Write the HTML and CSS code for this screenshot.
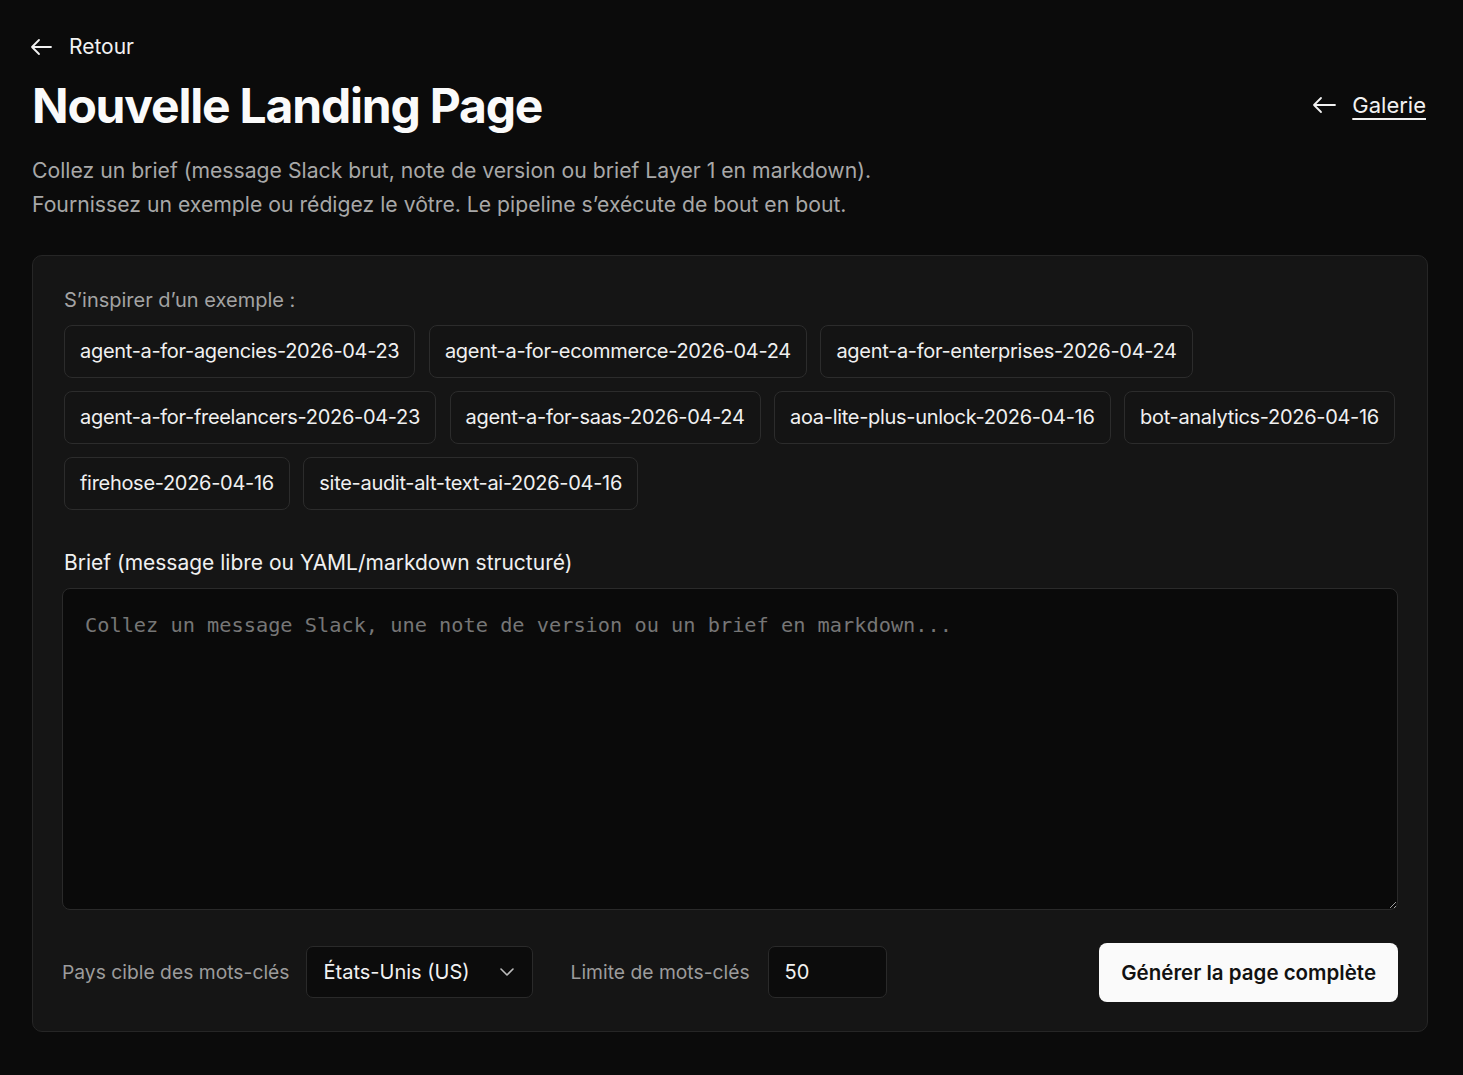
FILE: index.html
```html
<!DOCTYPE html>
<html lang="fr">
  <head>
    <meta charset="utf-8">
    <link rel="stylesheet" href="styles.css">
  </head>

  <body>
    <div class="page">
      <a class="back" href="#">
        <svg width="22" height="18" viewBox="0 0 22 18" fill="none" stroke="currentColor" stroke-width="1.8" stroke-linecap="round" stroke-linejoin="round">
          <path d="M21 9H2M9 2L2 9l7 7"/>
        </svg>
        Retour
      </a>

      <div class="titleRow">
        <h1>Nouvelle Landing Page</h1>
        <a class="gallery" href="#">
          <svg width="24" height="18" viewBox="0 0 24 18" fill="none" stroke="currentColor" stroke-width="1.8" stroke-linecap="round" stroke-linejoin="round">
            <path d="M23 9H2M9 2L2 9l7 7"/>
          </svg>
          <span>Galerie</span>
        </a>
      </div>

      <p class="intro">
        Collez un brief (message Slack brut, note de version ou brief Layer 1 en markdown).<br>
        Fournissez un exemple ou rédigez le vôtre. Le pipeline s’exécute de bout en bout.
      </p>

      <div class="panel">
        <p class="hint">S’inspirer d’un exemple :</p>
        <div class="chips">
          <button class="chip">agent-a-for-agencies-2026-04-23</button>
          <button class="chip">agent-a-for-ecommerce-2026-04-24</button>
          <button class="chip">agent-a-for-enterprises-2026-04-24</button>
          <button class="chip">agent-a-for-freelancers-2026-04-23</button>
          <button class="chip">agent-a-for-saas-2026-04-24</button>
          <button class="chip">aoa-lite-plus-unlock-2026-04-16</button>
          <button class="chip">bot-analytics-2026-04-16</button>
          <button class="chip">firehose-2026-04-16</button>
          <button class="chip">site-audit-alt-text-ai-2026-04-16</button>
        </div>

        <label class="briefLabel" for="brief">Brief (message libre ou YAML/markdown structuré)</label>
        <textarea id="brief" class="brief" placeholder="Collez un message Slack, une note de version ou un brief en markdown..."></textarea>

        <div class="options">
          <span class="optLabel">Pays cible des mots-clés</span>
          <div class="select">
            <span>États-Unis (US)</span>
            <svg width="16" height="10" viewBox="0 0 16 10" fill="none" stroke="currentColor" stroke-width="1.6" stroke-linecap="round" stroke-linejoin="round">
              <path d="M2 2l6 6 6-6"/>
            </svg>
          </div>
          <span class="optLabel limit">Limite de mots-clés</span>
          <input class="number" type="text" value="50">
          <button class="generate">Générer la page complète</button>
        </div>
      </div>
    </div>
  </body>
</html>
```

FILE: styles.css
```css
body {
  margin: 0;
  background-color: #0b0b0b;
  color: #f2f2f2;
  font-family: Inter, "Noto Sans", sans-serif;
}

.page {
  padding: 34px 36px 40px 32px;
}

.back {
  display: inline-flex;
  align-items: center;
  gap: 17px;
  color: #f2f2f2;
  text-decoration: none;
  font-size: 21px;
  margin-left: -2px;
}

.titleRow {
  display: flex;
  justify-content: space-between;
  align-items: center;
  margin-top: 16px;
}

h1 {
  margin: 0;
  font-size: 48px;
  font-weight: 700;
  letter-spacing: -1.2px;
  color: #fafafa;
}

.gallery {
  display: flex;
  align-items: center;
  gap: 16px;
  color: #f2f2f2;
  font-size: 22px;
  text-decoration: none;
  margin-right: 1px;
}

.gallery span {
  text-decoration: underline;
  text-underline-offset: 5px;
  text-decoration-thickness: 2px;
}

.intro {
  margin: 18px 0 0;
  font-size: 21.2px;
  line-height: 34px;
  color: #a8a8a8;
}

.panel {
  margin-top: 34px;
  margin-right: -1px;
  padding: 32px 29px 29px 31px;
  background-color: #151515;
  border: 1px solid #262626;
  border-radius: 10px;
}

.hint {
  margin: 0 0 13px;
  font-size: 20px;
  color: #a3a3a3;
}

.chips {
  display: flex;
  flex-wrap: wrap;
  gap: 13px 13.5px;
}

.chip {
  height: 53px;
  padding: 0 15px;
  background-color: #141414;
  border: 1px solid #2c2c2c;
  border-radius: 8px;
  color: #f0f0f0;
  font-family: inherit;
  font-size: 20px;
  letter-spacing: -0.3px;
}

.briefLabel {
  display: block;
  margin-top: 40px;
  margin-bottom: 13px;
  font-size: 21px;
  color: #f0f0f0;
}

.brief {
  display: block;
  box-sizing: border-box;
  width: calc(100% + 2px);
  height: 322px;
  margin-left: -2px;
  padding: 24px 22px;
  background-color: #0a0a0a;
  border: 1px solid #2a2a2a;
  border-radius: 8px;
  color: #f0f0f0;
  font-family: "DejaVu Sans Mono", "Liberation Mono", monospace;
  font-size: 20.3px;
  resize: vertical;
  outline: none;
}

.brief::placeholder {
  color: #767676;
}

.options {
  display: flex;
  align-items: center;
  margin-top: 33px;
  margin-left: -2px;
}

.optLabel {
  font-size: 19.3px;
  color: #9c9c9c;
}

.select {
  display: flex;
  align-items: center;
  justify-content: space-between;
  box-sizing: border-box;
  width: 227px;
  height: 52px;
  margin-left: 16px;
  padding: 0 17px 0 17px;
  background-color: #0c0c0c;
  border: 1px solid #2a2a2a;
  border-radius: 7px;
  font-size: 20px;
  color: #f2f2f2;
}

.select svg {
  color: #bdbdbd;
}

.limit {
  margin-left: 38px;
}

.number {
  box-sizing: border-box;
  width: 119px;
  height: 52px;
  margin-left: 18px;
  padding: 0 16px;
  background-color: #0c0c0c;
  border: 1px solid #2a2a2a;
  border-radius: 7px;
  color: #f2f2f2;
  font-family: inherit;
  font-size: 20px;
  outline: none;
}

.generate {
  margin-left: auto;
  height: 59px;
  padding: 0 22px;
  background-color: #fafafa;
  color: #111;
  border: none;
  border-radius: 8px;
  font-family: inherit;
  font-size: 20.5px;
  font-weight: 600;
  cursor: pointer;
}
```
